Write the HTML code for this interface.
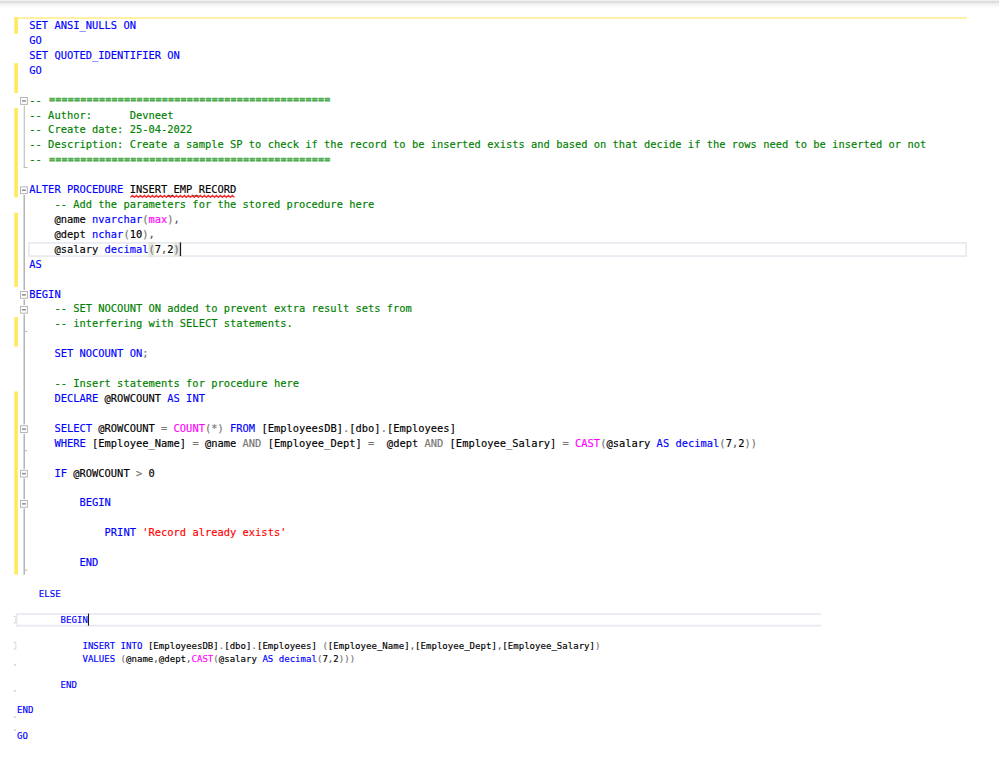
<!DOCTYPE html>
<html lang="en"><head><meta charset="utf-8"><title>INSERT_EMP_RECORD.sql</title>
<style>

html,body{margin:0;padding:0;background:#fff;}
body{width:999px;height:761px;position:relative;overflow:hidden;font-family:"DejaVu Sans Mono","Liberation Mono",monospace;}
.l{position:absolute;white-space:pre;margin:0;-webkit-text-stroke:0.15px;}
.t{left:29.3px;font-size:10.42px;letter-spacing:0.007px;line-height:14px;height:14px;}
.u{left:17px;font-size:9.05px;letter-spacing:0.006px;line-height:12px;height:12px;}
.k{color:#0000ff;} .c{color:#008000;} .m{color:#ff00ff;} .r{color:#ff0000;} .g{color:#767676;} .b{color:#000000;}
.e{color:#50ad50;-webkit-text-stroke:1px #50ad50;position:relative;font-size:8.4px;letter-spacing:1.2155px;margin-left:1.4px;top:-1px;}
.e1{top:-2px;}
.q{color:#555;}
.box{position:absolute;}
</style></head><body>
<svg class="box" style="left:0;top:0" width="999" height="761" viewBox="0 0 999 761">
<defs><linearGradient id="sh" x1="0" y1="0" x2="0" y2="1"><stop offset="0" stop-color="#f6f6f6"/><stop offset=".1" stop-color="#ececec"/><stop offset=".2" stop-color="#dcdcdc"/><stop offset=".32" stop-color="#dedede"/><stop offset=".42" stop-color="#ececec"/><stop offset=".6" stop-color="#f4f4f4"/><stop offset=".85" stop-color="#fbfbfb"/><stop offset="1" stop-color="#ffffff"/></linearGradient></defs>
<rect x="0" y="0" width="999" height="8" fill="url(#sh)"/>
<rect x="14.2" y="17.0" width="952.8" height="2.0" fill="#fff0a6"/>
<rect x="14.3" y="17.4" width="3.6" height="16.3" fill="#ffe95c"/>
<rect x="14.3" y="63.2" width="3.6" height="29.8" fill="#ffe95c"/>
<rect x="14.3" y="108.0" width="3.6" height="89.3" fill="#ffe95c"/>
<rect x="14.3" y="212.7" width="3.6" height="74.1" fill="#ffe95c"/>
<rect x="14.3" y="317.0" width="3.6" height="29.6" fill="#ffe95c"/>
<rect x="14.3" y="391.5" width="3.6" height="183.0" fill="#ffe95c"/>
<rect x="28.9" y="242.9" width="937.2" height="13.2" fill="#fff" stroke="#eaeaf3" stroke-width="1.8"/>
<rect x="16.2" y="613.1" width="804.7" height="1.9" fill="#eaeaf3"/>
<rect x="16.2" y="624.75" width="804.7" height="1.9" fill="#eaeaf3"/>
<rect x="16.2" y="613.1" width="1.5" height="13.5" fill="#eaeaf3"/>
<rect x="148.4" y="242.2" width="6.0" height="14.6" fill="#e0e4d6" opacity=".85"/>
<rect x="173.6" y="242.2" width="5.8" height="14.6" fill="#e0e4d6" opacity=".85"/>
<rect x="23.75" y="105.3" width="1.0" height="62.5" fill="#b6b6b6"/>
<rect x="23.6" y="167.0" width="4.0" height="0.9" fill="#b4b4b4"/>
<rect x="23.5" y="194.6" width="1.45" height="380" fill="#b2b2b2"/>
<rect x="24" y="331.0" width="3.4" height="0.9" fill="#b4b4b4"/>
<rect x="24" y="450.3" width="3.4" height="0.9" fill="#b4b4b4"/>
<rect x="24" y="569.7" width="3.4" height="0.9" fill="#b4b4b4"/>
<rect x="20.1" y="96.19999999999999" width="7.7" height="9.4" fill="#fff"/>
<rect x="20.55" y="97.55" width="6.8" height="6.8" fill="#fff" stroke="#b2b2b2" stroke-width="0.95"/>
<rect x="22.0" y="100.19999999999999" width="3.9" height="1.5" fill="#8c8c8c"/>
<rect x="20.1" y="185.5" width="7.7" height="9.4" fill="#fff"/>
<rect x="20.55" y="186.85" width="6.8" height="6.8" fill="#fff" stroke="#b2b2b2" stroke-width="0.95"/>
<rect x="22.0" y="189.5" width="3.9" height="1.5" fill="#8c8c8c"/>
<rect x="20.1" y="290.1" width="7.7" height="9.4" fill="#fff"/>
<rect x="20.55" y="291.45" width="6.8" height="6.8" fill="#fff" stroke="#b2b2b2" stroke-width="0.95"/>
<rect x="22.0" y="294.1" width="3.9" height="1.5" fill="#8c8c8c"/>
<rect x="20.1" y="305.0" width="7.7" height="9.4" fill="#fff"/>
<rect x="20.55" y="306.34999999999997" width="6.8" height="6.8" fill="#fff" stroke="#b2b2b2" stroke-width="0.95"/>
<rect x="22.0" y="309.0" width="3.9" height="1.5" fill="#8c8c8c"/>
<rect x="20.1" y="424.40000000000003" width="7.7" height="9.4" fill="#fff"/>
<rect x="20.55" y="425.75" width="6.8" height="6.8" fill="#fff" stroke="#b2b2b2" stroke-width="0.95"/>
<rect x="22.0" y="428.40000000000003" width="3.9" height="1.5" fill="#8c8c8c"/>
<rect x="20.1" y="468.90000000000003" width="7.7" height="9.4" fill="#fff"/>
<rect x="20.55" y="470.25" width="6.8" height="6.8" fill="#fff" stroke="#b2b2b2" stroke-width="0.95"/>
<rect x="22.0" y="472.90000000000003" width="3.9" height="1.5" fill="#8c8c8c"/>
<rect x="20.1" y="499.1" width="7.7" height="9.4" fill="#fff"/>
<rect x="20.55" y="500.45" width="6.8" height="6.8" fill="#fff" stroke="#b2b2b2" stroke-width="0.95"/>
<rect x="22.0" y="503.1" width="3.9" height="1.5" fill="#8c8c8c"/>
<polyline points="130.4,197.5 132.4,195.2 134.4,197.5 136.4,195.2 138.4,197.5 140.4,195.2 142.4,197.5 144.4,195.2 146.4,197.5 148.4,195.2 150.4,197.5 152.4,195.2 154.4,197.5 156.4,195.2 158.4,197.5 160.4,195.2 162.4,197.5 164.4,195.2 166.4,197.5 168.4,195.2 170.4,197.5 172.4,195.2 174.4,197.5 176.4,195.2 178.4,197.5 180.4,195.2 182.4,197.5 184.4,195.2 186.4,197.5 188.4,195.2 190.4,197.5 192.4,195.2 194.4,197.5 196.4,195.2 198.4,197.5 200.4,195.2 202.4,197.5 204.4,195.2 206.4,197.5 208.4,195.2 210.4,197.5 212.4,195.2 214.4,197.5 216.4,195.2 218.4,197.5 220.4,195.2 222.4,197.5 224.4,195.2 226.4,197.5 228.4,195.2 230.4,197.5 232.4,195.2 234.4,197.5" fill="none" stroke="#f03434" stroke-width="1.15" stroke-linejoin="round"/>
<rect x="179.8" y="242.4" width="1.3" height="13.7" fill="#1a1a1a"/>
<rect x="87.95" y="613.6" width="1.1" height="12.1" fill="#1a1a1a"/>
<path d="M13.8 616.3h2v6.8h-2" fill="none" stroke="#c4c4c4" stroke-width="0.9" stroke-dasharray="1.6 0.8"/>
<path d="M13.8 642.3h2v6.8h-2" fill="none" stroke="#c4c4c4" stroke-width="0.9" stroke-dasharray="1.6 0.8"/>
<rect x="14.0" y="664.3" width="1.7" height="1.4" fill="#c4c4c4"/>
<rect x="14.0" y="690.2" width="1.7" height="1.4" fill="#c4c4c4"/>
<rect x="14.0" y="716.4" width="1.7" height="1.4" fill="#c4c4c4"/>
<rect x="14.0" y="729.4" width="1.7" height="1.4" fill="#c4c4c4"/>
</svg>
<div class="l t" style="top:18.00px"><span class="k">SET ANSI_NULLS ON</span></div>
<div class="l t" style="top:33.00px"><span class="k">GO</span></div>
<div class="l t" style="top:48.00px"><span class="k">SET QUOTED_IDENTIFIER ON</span></div>
<div class="l t" style="top:63.00px"><span class="k">GO</span></div>
<div class="l t" style="top:93.00px"><span class="c">-- </span><span class="e e1">=============================================</span></div>
<div class="l t" style="top:108.00px"><span class="c">-- Author:      Devneet</span></div>
<div class="l t" style="top:122.00px"><span class="c">-- Create date: 25-04-2022</span></div>
<div class="l t" style="top:137.00px"><span class="c">-- Description: Create a sample SP to check if the record to be inserted exists and based on that decide if the rows need to be inserted or not</span></div>
<div class="l t" style="top:152.00px"><span class="c">-- </span><span class="e">=============================================</span></div>
<div class="l t" style="top:182.00px"><span class="k">ALTER PROCEDURE </span><span class="b">INSERT_EMP_RECORD</span></div>
<div class="l t" style="top:197.00px"><span class="c">    -- Add the parameters for the stored procedure here</span></div>
<div class="l t" style="top:212.00px"><span class="b">    @name </span><span class="k">nvarchar</span><span class="g">(</span><span class="m">max</span><span class="g">)<span class="q">,</span></span></div>
<div class="l t" style="top:227.00px"><span class="b">    @dept </span><span class="k">nchar</span><span class="g">(</span><span class="b">10</span><span class="g">)<span class="q">,</span></span></div>
<div class="l t" style="top:242.00px"><span class="b">    @salary </span><span class="k">decimal</span><span class="g">(</span><span class="b">7</span><span class="g"><span class="q">,</span></span><span class="b">2</span><span class="g">)</span></div>
<div class="l t" style="top:257.00px"><span class="k">AS</span></div>
<div class="l t" style="top:287.00px"><span class="k">BEGIN</span></div>
<div class="l t" style="top:301.00px"><span class="c">    -- SET NOCOUNT ON added to prevent extra result sets from</span></div>
<div class="l t" style="top:316.00px"><span class="c">    -- interfering with SELECT statements.</span></div>
<div class="l t" style="top:346.00px"><span class="k">    SET NOCOUNT ON</span><span class="g">;</span></div>
<div class="l t" style="top:376.00px"><span class="c">    -- Insert statements for procedure here</span></div>
<div class="l t" style="top:391.00px"><span class="k">    DECLARE </span><span class="b">@ROWCOUNT </span><span class="k">AS INT</span></div>
<div class="l t" style="top:421.00px"><span class="k">    SELECT </span><span class="b">@ROWCOUNT </span><span class="g">= </span><span class="m">COUNT</span><span class="g">(*) </span><span class="k">FROM </span><span class="b">[EmployeesDB]</span><span class="g">.</span><span class="b">[dbo]</span><span class="g">.</span><span class="b">[Employees]</span></div>
<div class="l t" style="top:436.00px"><span class="k">    WHERE </span><span class="b">[Employee_Name] </span><span class="g">= </span><span class="b">@name </span><span class="g">AND </span><span class="b">[Employee_Dept] </span><span class="g">=  </span><span class="b">@dept </span><span class="g">AND </span><span class="b">[Employee_Salary] </span><span class="g">= </span><span class="m">CAST</span><span class="g">(</span><span class="b">@salary </span><span class="k">AS decimal</span><span class="g">(</span><span class="b">7</span><span class="g"><span class="q">,</span></span><span class="b">2</span><span class="g">))</span></div>
<div class="l t" style="top:466.00px"><span class="k">    IF </span><span class="b">@ROWCOUNT </span><span class="g">&gt; </span><span class="b">0</span></div>
<div class="l t" style="top:495.00px"><span class="k">        BEGIN</span></div>
<div class="l t" style="top:525.00px"><span class="k">            PRINT </span><span class="r">'Record already exists'</span></div>
<div class="l t" style="top:555.00px"><span class="k">        END</span></div>
<div class="l u" style="top:588.00px"><span class="k">    ELSE</span></div>
<div class="l u" style="top:614.00px"><span class="k">        BEGIN</span></div>
<div class="l u" style="top:640.00px"><span class="k">            INSERT INTO </span><span class="b">[EmployeesDB]</span><span class="g">.</span><span class="b">[dbo]</span><span class="g">.</span><span class="b">[Employees] </span><span class="g">(</span><span class="b">[Employee_Name]</span><span class="g"><span class="q">,</span></span><span class="b">[Employee_Dept]</span><span class="g"><span class="q">,</span></span><span class="b">[Employee_Salary]</span><span class="g">)</span></div>
<div class="l u" style="top:653.00px"><span class="k">            VALUES </span><span class="g">(</span><span class="b">@name</span><span class="g"><span class="q">,</span></span><span class="b">@dept</span><span class="g"><span class="q">,</span></span><span class="m">CAST</span><span class="g">(</span><span class="b">@salary </span><span class="k">AS decimal</span><span class="g">(</span><span class="b">7</span><span class="g"><span class="q">,</span></span><span class="b">2</span><span class="g">)))</span></div>
<div class="l u" style="top:679.00px"><span class="k">        END</span></div>
<div class="l u" style="top:704.00px"><span class="k">END</span></div>
<div class="l u" style="top:730.00px"><span class="k">GO</span></div>
</body></html>
